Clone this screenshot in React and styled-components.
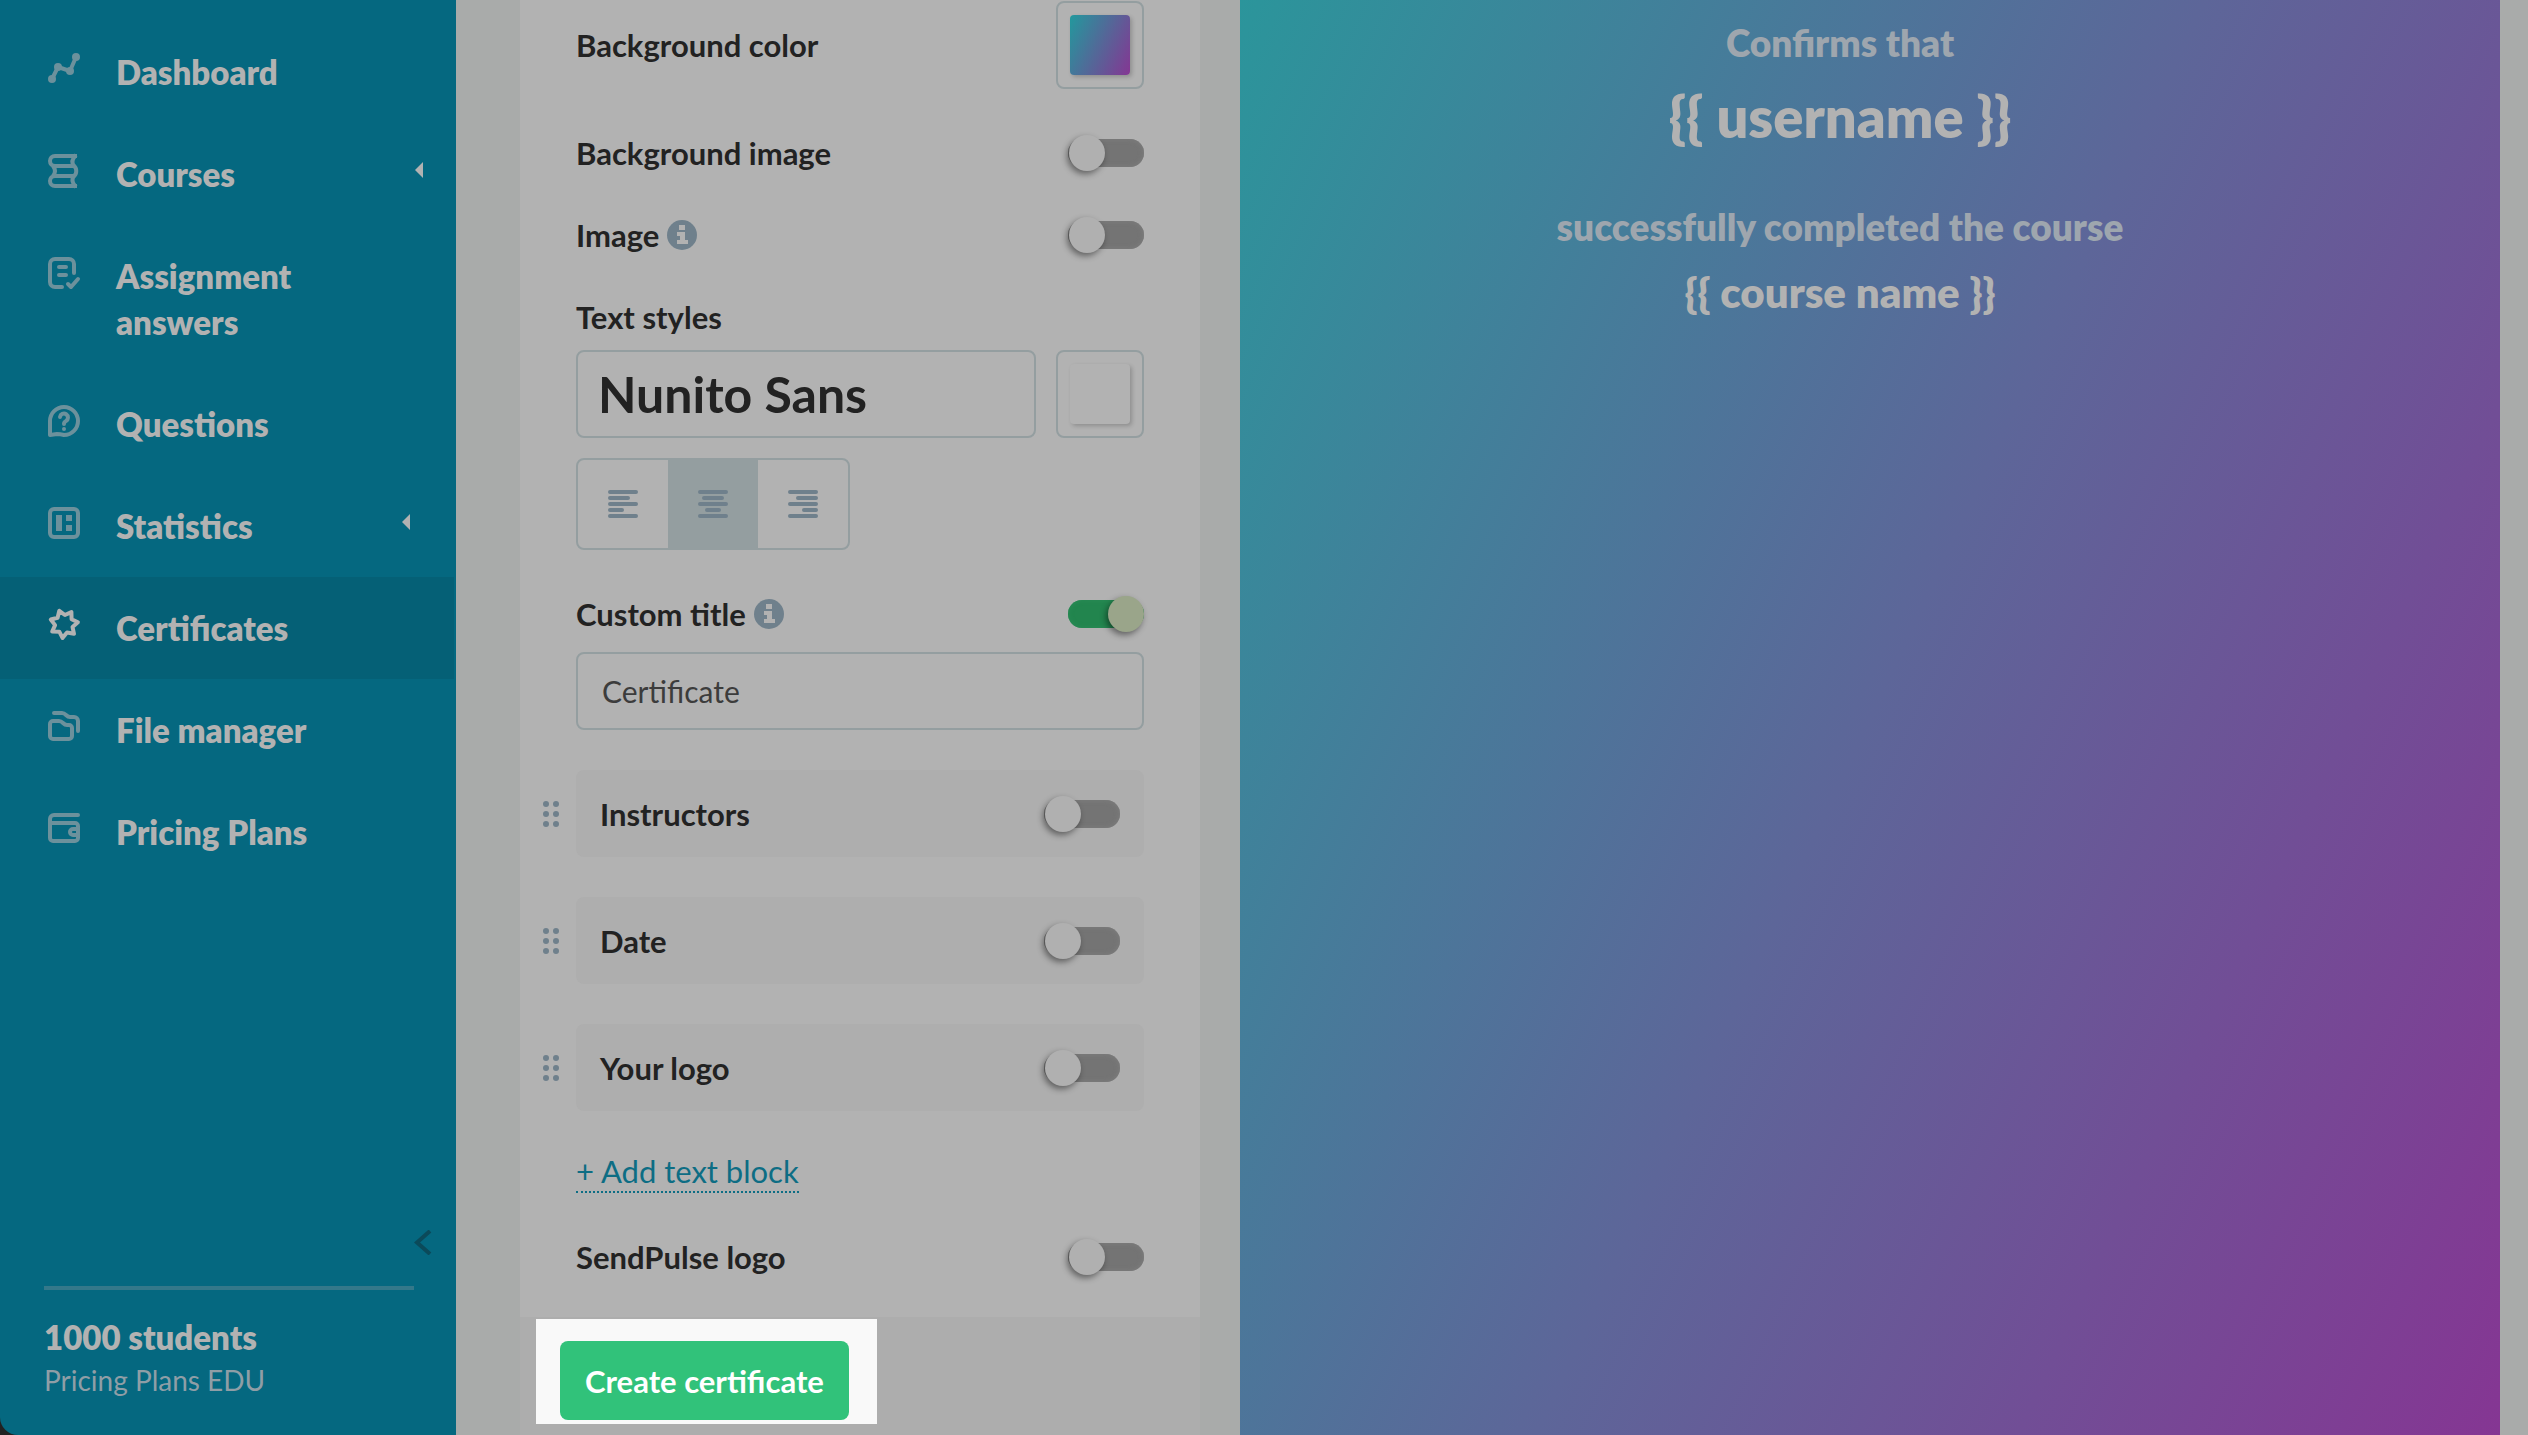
import * as React from 'react';
import {useState} from "react";
import styled, {createGlobalStyle} from "styled-components";

const GlobalStyle = createGlobalStyle`
  * {
    box-sizing: border-box;
  }

  body {
    margin: 0;
    background: #a9abaa;
    color: #222;
    font-family: Lato, "Open Sans", sans-serif;
    font-size: 31px;
  }

  button, input, select {
    font: inherit;
    color: inherit;
  }
`;

const starPoints = Array.from({length: 14}, (_, i) => {
    const angle = (96 + i * 360 / 14) * Math.PI / 180;
    const radius = i % 2 === 0 ? 14 : 9;
    return `${(16 + radius * Math.cos(angle)).toFixed(1)},${(15 + radius * Math.sin(angle)).toFixed(1)}`;
}).join(" ");

const icons = {
    dashboard: <>
        <path d="M4 26 10 14 22 18 28 4" />
        <g fill="currentColor" stroke="none">
            <circle cx="4" cy="26" r="4" />
            <circle cx="10" cy="14" r="4" />
            <circle cx="22" cy="18" r="4" />
            <circle cx="28" cy="4" r="4" />
        </g>
    </>,
    courses: <>
        <path strokeLinecap="butt" d="M29 1H7C4 1 2 3 2 6s2 5 5 5h19c3 2 3 8 0 10H7c-3 0-5 2-5 5s2 5 5 5h22" />
        <path strokeLinecap="butt" d="M28 0q-6 6-2 11M5 11q4 5 0 10M26 21q-4 5 2 11" />
    </>,
    assignment: <>
        <path d="M26 16V7a5 5 0 0 0-5-5H7a5 5 0 0 0-5 5v18a5 5 0 0 0 5 5h7" />
        <path d="M11 10h7M11 18h7M20 27l3 3 7-8" />
    </>,
    questions: <>
        <path d="M2 30V16A14 14 0 1 1 16 30q-4-1-7-1z" />
        <path strokeWidth="4" d="M12 12a4 4 0 1 1 6 4q-2 1-2 3" />
        <circle cx="16" cy="24" r="2" fill="currentColor" stroke="none" />
    </>,
    statistics: <>
        <rect x="2" y="2" width="28" height="28" rx="4" />
        <path fill="currentColor" stroke="none" d="M8 8h6v16H8zM18 8h6v6h-6zM18 18h6v6h-6z" />
    </>,
    certificates: <polygon points={starPoints} />,
    files: <>
        <path d="M6 2h8c4 0 4 4 8 4h4a4 4 0 0 1 4 4v10" />
        <path d="M2 13a3 3 0 0 1 3-3h6c4 0 4 4 8 4h2a3 3 0 0 1 3 3v8a3 3 0 0 1-3 3H5a3 3 0 0 1-3-3z" />
    </>,
    pricing: <>
        <path d="M30 2H6a4 4 0 0 0-4 4v19a3 3 0 0 0 3 3h22a3 3 0 0 0 3-3V13a3 3 0 0 0-3-3H2" />
        <path d="M30 16h-5a3 3 0 0 0 0 6h5" />
    </>,
};

const menu = [
    {icon: "dashboard", title: "Dashboard"},
    {icon: "courses", title: "Courses", caret: 33},
    {icon: "assignment", title: "Assignment answers"},
    {icon: "questions", title: "Questions"},
    {icon: "statistics", title: "Statistics", caret: 46},
    {icon: "certificates", title: "Certificates", active: true},
    {icon: "files", title: "File manager"},
    {icon: "pricing", title: "Pricing Plans"},
];

const alignLines = {
    left: "M2 2h26M2 8h18M2 14h26M2 20h12M2 26h26",
    center: "M2 2h26M6 8h18M2 14h26M9 20h12M2 26h26",
    right: "M2 2h26M10 8h18M2 14h26M16 20h12M2 26h26",
};

const Sidebar = () => (
    <Aside>
        <nav>
            {menu.map(({icon, title, caret, active}) => (
                <MenuLink href="#" key={icon} $active={active}>
                    <MenuIcon viewBox="0 0 32 32" $active={active}>{icons[icon]}</MenuIcon>
                    <MenuText>{title}</MenuText>
                    {caret && <Caret viewBox="0 0 8 16" $inset={caret}><path d="M8 0v16L0 8z" /></Caret>}
                </MenuLink>
            ))}
        </nav>
        <AsideBottom>
            <Collapse type="button" aria-label="Collapse menu">
                <svg width="18" height="25" viewBox="0 0 18 25">
                    <path d="M16 1 3 12.500 16 24" fill="none" stroke="#0b4a5a" strokeWidth="4" />
                </svg>
            </Collapse>
            <Plan>
                <PlanTitle>1000 students</PlanTitle>
                <PlanName>Pricing Plans EDU</PlanName>
            </Plan>
        </AsideBottom>
    </Aside>
);

const Info = () => (
    <InfoIcon viewBox="0 0 30 30">
        <circle cx="15" cy="15" r="15" fill="#6f808c" />
        <path fill="#b2b2b2" d="M12 5h6v5h-6zM10 12h8v8h3v4H10v-4h3v-4h-3z" />
    </InfoIcon>
);

const SwitchRow = ({id, title, info, checked}) => (
    <Row>
        <Label htmlFor={id}>{title}</Label>
        {info && <Info />}
        <Switch type="checkbox" id={id} defaultChecked={checked} />
    </Row>
);

const Block = ({id, title}) => (
    <BlockRow>
        <Handle type="button" aria-label={`Move ${title}`}>
            <svg width="16" height="28" viewBox="0 0 16 28" fill="#6f808c">
                {[3, 13].map((x) => [4, 14, 24].map((y) => <circle key={`${x}-${y}`} cx={x} cy={y} r="3" />))}
            </svg>
        </Handle>
        <BlockBody>
            <Label htmlFor={id}>{title}</Label>
            <Switch type="checkbox" id={id} />
        </BlockBody>
    </BlockRow>
);

const Editor = () => {
    const [align, setAlign] = useState("center");

    return (
        <Panel>
            <Settings>
                <Row>
                    <Label as="span">Background color</Label>
                    <ColorButton type="button" aria-label="Background color">
                        <Color $value="linear-gradient(115deg, #22999d, #853693)" />
                    </ColorButton>
                </Row>
                <SwitchRow id="bg-image" title="Background image" />
                <SwitchRow id="image" title="Image" info />

                <Group>
                    <Label htmlFor="font">Text styles</Label>
                    <FontRow>
                        <FontSelect id="font" defaultValue="Nunito Sans">
                            <option>Nunito Sans</option>
                        </FontSelect>
                        <ColorButton type="button" aria-label="Text color">
                            <Color $value="#b2b2b2" />
                        </ColorButton>
                    </FontRow>
                    <AlignGroup>
                        {Object.keys(alignLines).map((name) => (
                            <AlignButton
                                type="button"
                                key={name}
                                aria-label={`Align ${name}`}
                                aria-pressed={align === name}
                                $active={align === name}
                                onClick={() => setAlign(name)}
                            >
                                <svg width="30" height="28" viewBox="0 0 30 28">
                                    <path d={alignLines[name]} stroke="#6f808c" strokeWidth="4" strokeLinecap="round" />
                                </svg>
                            </AlignButton>
                        ))}
                    </AlignGroup>
                </Group>

                <Blocks>
                    <TitleGroup>
                        <SwitchRow id="custom-title" title="Custom title" info checked />
                        <TextInput type="text" aria-label="Custom title" defaultValue="Certificate" />
                    </TitleGroup>
                    <Block id="instructors" title="Instructors" />
                    <Block id="date" title="Date" />
                    <Block id="your-logo" title="Your logo" />
                    <AddLink href="#">+ Add text block</AddLink>
                </Blocks>

                <SwitchRow id="sendpulse-logo" title="SendPulse logo" />
            </Settings>
            <PanelFooter>
                <Highlight>
                    <Submit type="button">Create certificate</Submit>
                </Highlight>
            </PanelFooter>
        </Panel>
    );
};

const App = () => (
    <>
        <GlobalStyle />
        <Page>
            <Sidebar />
            <Main>
                <Editor />
                <Preview>
                    <Caption>Confirms that</Caption>
                    <UserName>{"{{ username }}"}</UserName>
                    <Caption>successfully completed the course</Caption>
                    <CourseName>{"{{ course name }}"}</CourseName>
                </Preview>
            </Main>
        </Page>
    </>
);

export default App;

const Page = styled.div`
  display: flex;
  min-height: 100vh;
  background: linear-gradient(90deg, #222 228px, #a9abaa 228px);
`;

const Aside = styled.aside`
  display: flex;
  flex-direction: column;
  justify-content: space-between;
  flex: 0 0 456px;
  padding-top: 21px;
  border-bottom-left-radius: 18px;
  background: #056880;
  color: #b2b2b2;
`;

const MenuLink = styled.a`
  display: flex;
  align-items: flex-start;
  gap: 36px;
  margin-right: 2px;
  padding: 28px 0 28px 48px;
  background: ${({$active}) => $active ? "#056076" : "none"};
  color: inherit;
  font-size: 33px;
  font-weight: 800;
  line-height: 46px;
  text-decoration: none;
`;

const MenuIcon = styled.svg`
  flex: none;
  width: 32px;
  height: 32px;
  margin-top: 4px;
  overflow: visible;
  fill: none;
  stroke: currentColor;
  stroke-width: 4px;
  stroke-linecap: round;
  stroke-linejoin: round;
  color: ${({$active}) => $active ? "#b2b2b2" : "#6c919c"};
`;

const MenuText = styled.span`
  flex: 1;
  max-width: 220px;
`;

const Caret = styled.svg`
  width: 8px;
  height: 16px;
  margin: 11px ${({$inset}) => $inset - 2}px 0 auto;
  fill: #b2b2b2;
`;

const AsideBottom = styled.div`
  display: flex;
  flex-direction: column;
`;

const Collapse = styled.button`
  display: flex;
  align-self: flex-end;
  margin: 0 24px 31px 0;
  padding: 0;
  border: none;
  background: none;
`;

const Plan = styled.div`
  margin: 0 42px 0 44px;
  padding: 24px 0 35px;
  border-top: 4px solid #34788a;
`;

const PlanTitle = styled.div`
  font-size: 33px;
  font-weight: 800;
  line-height: 46px;
`;

const PlanName = styled.div`
  color: #8f9ea6;
  font-size: 28px;
  line-height: 40px;
`;

const Main = styled.main`
  display: flex;
  flex: 1;
  gap: 40px;
  padding: 0 28px 0 64px;
  background: #a9abaa;
`;

const Panel = styled.form`
  display: flex;
  flex-direction: column;
  flex: 0 0 680px;
  background: #adadad;
`;

const Settings = styled.div`
  display: flex;
  flex-direction: column;
  gap: 46px;
  padding: 1px 56px 42px;
  background: #b2b2b2;
`;

const Row = styled.div`
  display: flex;
  align-items: center;
  gap: 8px;

  & > :last-child {
    margin-left: auto;
  }
`;

const Label = styled.label`
  font-weight: 700;
  line-height: 36px;
`;

const InfoIcon = styled.svg`
  width: 30px;
  height: 30px;
`;

const Switch = styled.input`
  position: relative;
  width: 76px;
  height: 28px;
  margin: 4px 0;
  border-radius: 14px;
  appearance: none;
  background: #747474;
  box-shadow: inset 0 0 4px 1px #7c7c7c;

  &::before {
    content: "";
    position: absolute;
    top: -4px;
    left: 1px;
    width: 36px;
    height: 36px;
    border-radius: 50%;
    background: #b0b0b0;
    box-shadow: -2px 3px 6px rgba(0, 0, 0, 0.45);
  }

  &:checked {
    background: #22854e;
    box-shadow: inset 0 0 4px 1px #288a54;
  }

  &:checked::before {
    left: 40px;
    background: #9aa58a;
  }
`;

const ColorButton = styled.button`
  flex: none;
  width: 88px;
  height: 88px;
  padding: 12px;
  border: 2px solid #949ea0;
  border-radius: 8px;
  background: none;
`;

const Color = styled.span`
  display: block;
  height: 60px;
  border-radius: 4px;
  background: ${({$value}) => $value};
  box-shadow: 2px 2px 4px rgba(0, 0, 0, 0.2);
`;

const Group = styled.div`
  display: flex;
  flex-direction: column;
  align-items: flex-start;
`;

const FontRow = styled.div`
  display: flex;
  gap: 20px;
  width: 100%;
  margin: 15px 0 20px;
`;

const FontSelect = styled.select`
  flex: 1;
  height: 88px;
  padding: 0 20px;
  border: 2px solid #949ea0;
  border-radius: 8px;
  appearance: none;
  background: none;
  font-size: 50px;
  font-weight: 700;
`;

const AlignGroup = styled.div`
  display: flex;
  overflow: hidden;
  border: 2px solid #949ea0;
  border-radius: 8px;
`;

const AlignButton = styled.button`
  display: flex;
  align-items: center;
  justify-content: center;
  width: 90px;
  height: 88px;
  padding: 0;
  border: none;
  background: ${({$active}) => $active ? "#949ea0" : "none"};
`;

const TitleGroup = styled.div`
  display: flex;
  flex-direction: column;
  align-self: stretch;
  gap: 20px;
`;

const TextInput = styled.input`
  width: 100%;
  height: 78px;
  padding: 0 24px;
  border: 2px solid #949ea0;
  border-radius: 8px;
  background: none;
  color: #3c3c3c;
  font-size: 30px;
`;

const Blocks = styled.div`
  display: flex;
  flex-direction: column;
  align-items: flex-start;
  gap: 40px;
`;

const BlockRow = styled.div`
  display: flex;
  align-items: center;
  align-self: stretch;
  gap: 17px;
  margin-left: -33px;
`;

const Handle = styled.button`
  display: flex;
  padding: 0;
  border: none;
  background: none;
`;

const BlockBody = styled.div`
  display: flex;
  flex: 1;
  align-items: center;
  justify-content: space-between;
  height: 87px;
  padding: 0 24px;
  border-radius: 8px;
  background: #aeaeae;
`;

const AddLink = styled.a`
  border-bottom: 2px dotted #0d6d84;
  color: #0d6d84;
  line-height: 40px;
  text-decoration: none;
`;

const PanelFooter = styled.div`
  padding: 2px 16px 11px;
`;

const Highlight = styled.div`
  width: fit-content;
  padding: 22px 28px 4px 24px;
  background: #f9f9f9;
`;

const Submit = styled.button`
  display: block;
  height: 79px;
  padding: 0 25px;
  border: none;
  border-radius: 8px;
  background: #31c27a;
  color: #fff;
  font-weight: 700;
`;

const Preview = styled.section`
  display: flex;
  flex-direction: column;
  align-items: center;
  flex: 1;
  padding: 18px 100px 40px 40px;
  background: linear-gradient(115deg, #2b959b, #5d6699 50%, #853693);
  color: #b2b2b2;
  font-weight: 800;
  text-align: center;
`;

const Caption = styled.div`
  color: #9ea6ae;
  font-size: 37px;
  line-height: 50px;
`;

const UserName = styled.div`
  margin: 14px 0 50px;
  font-size: 56px;
  line-height: 70px;
`;

const CourseName = styled.div`
  margin-top: 14px;
  font-size: 42px;
  line-height: 52px;
`;
